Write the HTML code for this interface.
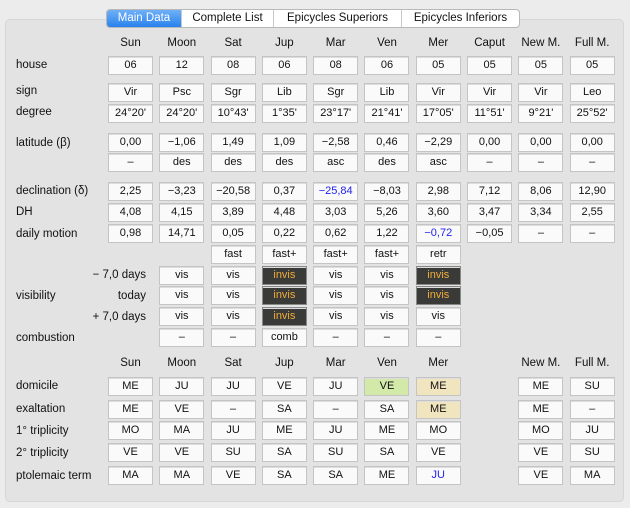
<!DOCTYPE html><html><head><style>
body{margin:0;width:630px;height:508px;background:#ececec;font-family:"Liberation Sans",sans-serif;font-size:11px;color:#111;position:relative;overflow:hidden}
.panel{position:absolute;left:5px;top:19px;width:617px;height:481px;background:#e3e3e3;border:1px solid #d6d6d6;border-radius:5px}
.tabs{position:absolute;left:106px;top:9px;height:17px;display:flex;background:#fff;border:1px solid #b8b8b8;border-radius:4px;overflow:hidden;font-size:11.5px}
.tabs div{line-height:17px;border-left:1px solid #c8c8c8;text-align:center}
.tabs .a{background:linear-gradient(#6fb0f6,#2a82ee);color:#fff;border:none;width:74px}
.r{position:absolute;left:108px;display:flex;height:19px}
.r span{width:43px;height:17px;margin-right:6.3px;background:#fafafa;border:1px solid #c4c4c4;box-shadow:inset 0 1px 0 #ddd;text-align:center;line-height:17px;flex:none}
.r span.h{visibility:hidden}
.r span.i{background:#3a3a38;color:#f1ad3a;border-color:#888}
.r span.g{background:#d3e9a9}
.r span.t{background:#f1e5bf}
.r span.b{color:#2222ee}
.hd{position:absolute;left:108px;display:flex}
.hd b{font-weight:normal;width:45px;margin-right:6.3px;text-align:center;font-size:11.5px}
.l{position:absolute;left:16px;font-size:11.5px}
.l2{position:absolute;right:484px;font-size:11.5px}
</style></head><body>
<div class="panel"></div>
<div class="tabs"><div class="a">Main Data</div><div style="width:91px">Complete List</div><div style="width:127px">Epicycles Superiors</div><div style="width:117px">Epicycles Inferiors</div></div>
<div class="hd" style="top:37px"><b>Sun</b><b>Moon</b><b>Sat</b><b>Jup</b><b>Mar</b><b>Ven</b><b>Mer</b><b>Caput</b><b>New M.</b><b>Full M.</b></div>
<div class="l" style="top:59px">house</div>
<div class="r" style="top:56px"><span>06</span><span>12</span><span>08</span><span>06</span><span>08</span><span>06</span><span>05</span><span>05</span><span>05</span><span>05</span></div>
<div class="l" style="top:85px">sign</div>
<div class="r" style="top:83px"><span>Vir</span><span>Psc</span><span>Sgr</span><span>Lib</span><span>Sgr</span><span>Lib</span><span>Vir</span><span>Vir</span><span>Vir</span><span>Leo</span></div>
<div class="l" style="top:106px">degree</div>
<div class="r" style="top:104px"><span>24°20'</span><span>24°20'</span><span>10°43'</span><span>1°35'</span><span>23°17'</span><span>21°41'</span><span>17°05'</span><span>11°51'</span><span>9°21'</span><span>25°52'</span></div>
<div class="l" style="top:137px">latitude (β)</div>
<div class="r" style="top:133px"><span>0,00</span><span>−1,06</span><span>1,49</span><span>1,09</span><span>−2,58</span><span>0,46</span><span>−2,29</span><span>0,00</span><span>0,00</span><span>0,00</span></div>
<div class="r" style="top:153px"><span>–</span><span>des</span><span>des</span><span>des</span><span>asc</span><span>des</span><span>asc</span><span>–</span><span>–</span><span>–</span></div>
<div class="l" style="top:185px">declination (δ)</div>
<div class="r" style="top:182px"><span>2,25</span><span>−3,23</span><span>−20,58</span><span>0,37</span><span class="b">−25,84</span><span>−8,03</span><span>2,98</span><span>7,12</span><span>8,06</span><span>12,90</span></div>
<div class="l" style="top:206px">DH</div>
<div class="r" style="top:203px"><span>4,08</span><span>4,15</span><span>3,89</span><span>4,48</span><span>3,03</span><span>5,26</span><span>3,60</span><span>3,47</span><span>3,34</span><span>2,55</span></div>
<div class="l" style="top:228px">daily motion</div>
<div class="r" style="top:224px"><span>0,98</span><span>14,71</span><span>0,05</span><span>0,22</span><span>0,62</span><span>1,22</span><span class="b">−0,72</span><span>−0,05</span><span>–</span><span>–</span></div>
<div class="r" style="top:245px"><span class="h"></span><span class="h"></span><span>fast</span><span>fast+</span><span>fast+</span><span>fast+</span><span>retr</span></div>
<div class="l2" style="top:269px">− 7,0 days</div>
<div class="r" style="top:266px"><span class="h"></span><span>vis</span><span>vis</span><span class="i">invis</span><span>vis</span><span>vis</span><span class="i">invis</span></div>
<div class="l" style="top:290px">visibility</div>
<div class="l2" style="top:290px">today</div>
<div class="r" style="top:286px"><span class="h"></span><span>vis</span><span>vis</span><span class="i">invis</span><span>vis</span><span>vis</span><span class="i">invis</span></div>
<div class="l2" style="top:311px">+ 7,0 days</div>
<div class="r" style="top:307px"><span class="h"></span><span>vis</span><span>vis</span><span class="i">invis</span><span>vis</span><span>vis</span><span>vis</span></div>
<div class="l" style="top:332px">combustion</div>
<div class="r" style="top:328px"><span class="h"></span><span>–</span><span>–</span><span>comb</span><span>–</span><span>–</span><span>–</span></div>
<div class="hd" style="top:357px"><b>Sun</b><b>Moon</b><b>Sat</b><b>Jup</b><b>Mar</b><b>Ven</b><b>Mer</b><b></b><b>New M.</b><b>Full M.</b></div>
<div class="l" style="top:380px">domicile</div>
<div class="r" style="top:377px"><span>ME</span><span>JU</span><span>JU</span><span>VE</span><span>JU</span><span class="g">VE</span><span class="t">ME</span><span class="h"></span><span>ME</span><span>SU</span></div>
<div class="l" style="top:403px">exaltation</div>
<div class="r" style="top:400px"><span>ME</span><span>VE</span><span>–</span><span>SA</span><span>–</span><span>SA</span><span class="t">ME</span><span class="h"></span><span>ME</span><span>–</span></div>
<div class="l" style="top:425px">1° triplicity</div>
<div class="r" style="top:421px"><span>MO</span><span>MA</span><span>JU</span><span>ME</span><span>JU</span><span>ME</span><span>MO</span><span class="h"></span><span>MO</span><span>JU</span></div>
<div class="l" style="top:447px">2° triplicity</div>
<div class="r" style="top:443px"><span>VE</span><span>VE</span><span>SU</span><span>SA</span><span>SU</span><span>SA</span><span>VE</span><span class="h"></span><span>VE</span><span>SU</span></div>
<div class="l" style="top:470px">ptolemaic term</div>
<div class="r" style="top:466px"><span>MA</span><span>MA</span><span>VE</span><span>SA</span><span>SA</span><span>ME</span><span class="b">JU</span><span class="h"></span><span>VE</span><span>MA</span></div>
</body></html>
